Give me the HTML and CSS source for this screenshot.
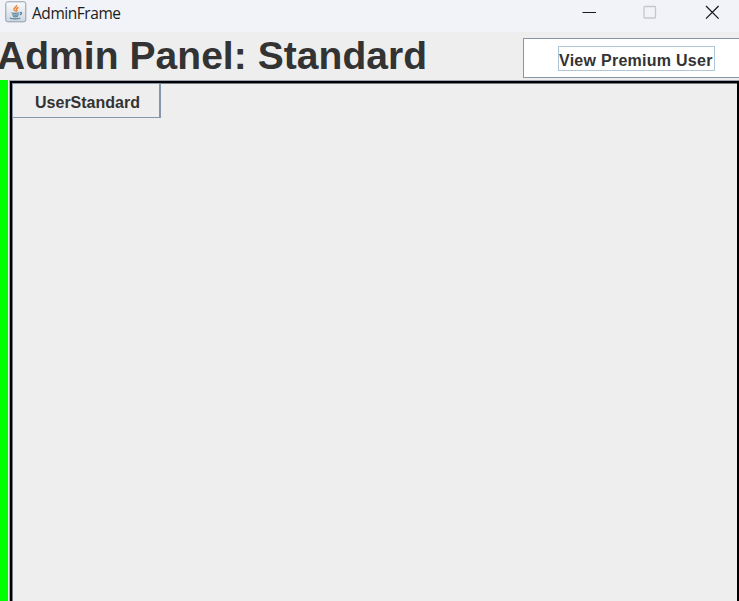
FILE: index.html
```html
<!DOCTYPE html>
<html lang="en">
<head>
<meta charset="utf-8">
<title>AdminFrame</title>
<link rel="stylesheet" href="styles.css">
</head>
<body>
<div class="window">
  <header class="titlebar">
    <svg class="app-icon" width="22" height="22" viewBox="0 0 22 22" fill="none">
      <defs><linearGradient id="tile" x1="0" y1="0" x2="0" y2="1"><stop offset="0" stop-color="#fafbfc"/><stop offset="1" stop-color="#cdd7e0"/></linearGradient></defs>
      <rect x=".8" y=".8" width="20" height="20" rx="2" fill="url(#tile)" stroke="#929da8"/>
      <path d="M11.500 4c.8 2-3.300 2.700-2.500 4.700.4.800 1.300 1 1.600 1.800M13.500 6.500c-2.200.800-2.700 1.500-1.700 2.500.5.600.2 1.200-.3 1.700" stroke="#e98231" stroke-width="1.400"/>
      <path d="M6.500 11.700c2 .7 6 .6 8 0M7.300 13.600c1.800.7 4.800.6 6.400 0M8 15.500c1.600.5 3.600.4 5 0M15 11.500c2.200-.4 1.900 1.800-.2 2.300M5.500 16.600c-1.500 1.400 7.300 1.800 9.800.3" stroke="#55819f" stroke-width="1.200"/>
    </svg>
    <span class="caption">AdminFrame</span>
    <svg class="controls" width="140" height="16" viewBox="0 0 140 16" fill="none">
      <path d="M.5 8.500H14" stroke="#1b1b1c" stroke-width="1"/>
      <rect x="62" y="2.500" width="11.500" height="11.500" rx=".7" stroke="#c6c7cb" stroke-width="1.300"/>
      <path d="M124 2l12.600 12.600M136.600 2L124 14.600" stroke="#1b1b1c" stroke-width="1.300"/>
    </svg>
  </header>
  <section class="heading">
    <h1>Admin Panel: Standard</h1>
    <button class="premium"><span>View Premium User</span></button>
  </section>
  <main class="content">
    <div class="accent"></div>
    <div class="panel"><button class="user">UserStandard</button></div>
  </main>
</div>
</body>
</html>
```
FILE: styles.css
```css
* { box-sizing: border-box; }
body { margin: 0; overflow: hidden; background: #eee; color: #333; font-family: "Liberation Sans", Arial, sans-serif; }
.window { width: 739px; height: 601px; display: flex; flex-direction: column; overflow: hidden; }
.titlebar { height: 32px; flex: none; background: #f1f3f9; display: flex; align-items: flex-start; padding: 1px 0 0 5px; }
.app-icon { flex: none; }
.caption { margin-left: 5px; font: 15.5px/24px "Open Sans", "Noto Sans", sans-serif; letter-spacing: -.45px; color: #1b1b1c; }
.controls { margin: 3px 17px 0 auto; flex: none; }
.heading { height: 48px; flex: none; display: flex; justify-content: space-between; }
h1 { margin: 0 0 0 -3px; font-size: 39px; line-height: 47px; letter-spacing: .05px; white-space: nowrap; }
button { color: #333; font: bold 16px/19px "Liberation Sans", Arial, sans-serif; white-space: nowrap; }
.premium { width: 216px; height: 40px; flex: none; margin-top: 6px; padding: 7px 0 0 34px; text-align: left; border: 1px solid #8496a8; border-right: 0; background: #fff; display: flex; align-items: flex-start; }
.premium span { width: 157px; height: 25px; padding: 4px 0 0; border: 1px solid #b0c6d9; letter-spacing: .27px; }
.content { flex: 1; display: flex; }
.accent { width: 8px; background: #0f0; }
.panel { flex: 1; margin: 1px 0 0 2px; border: 2px solid #000; border-bottom: 0; box-shadow: 0 0 0 1px #9da3b0, inset 1px 1px #777b82; }
.user { display: block; width: 149px; height: 35px; margin: 0; padding: 4px 0 0 3px; background: #eee; border: 1px solid #8496a8; border-width: 1px 2px 1px 1px; }
```
